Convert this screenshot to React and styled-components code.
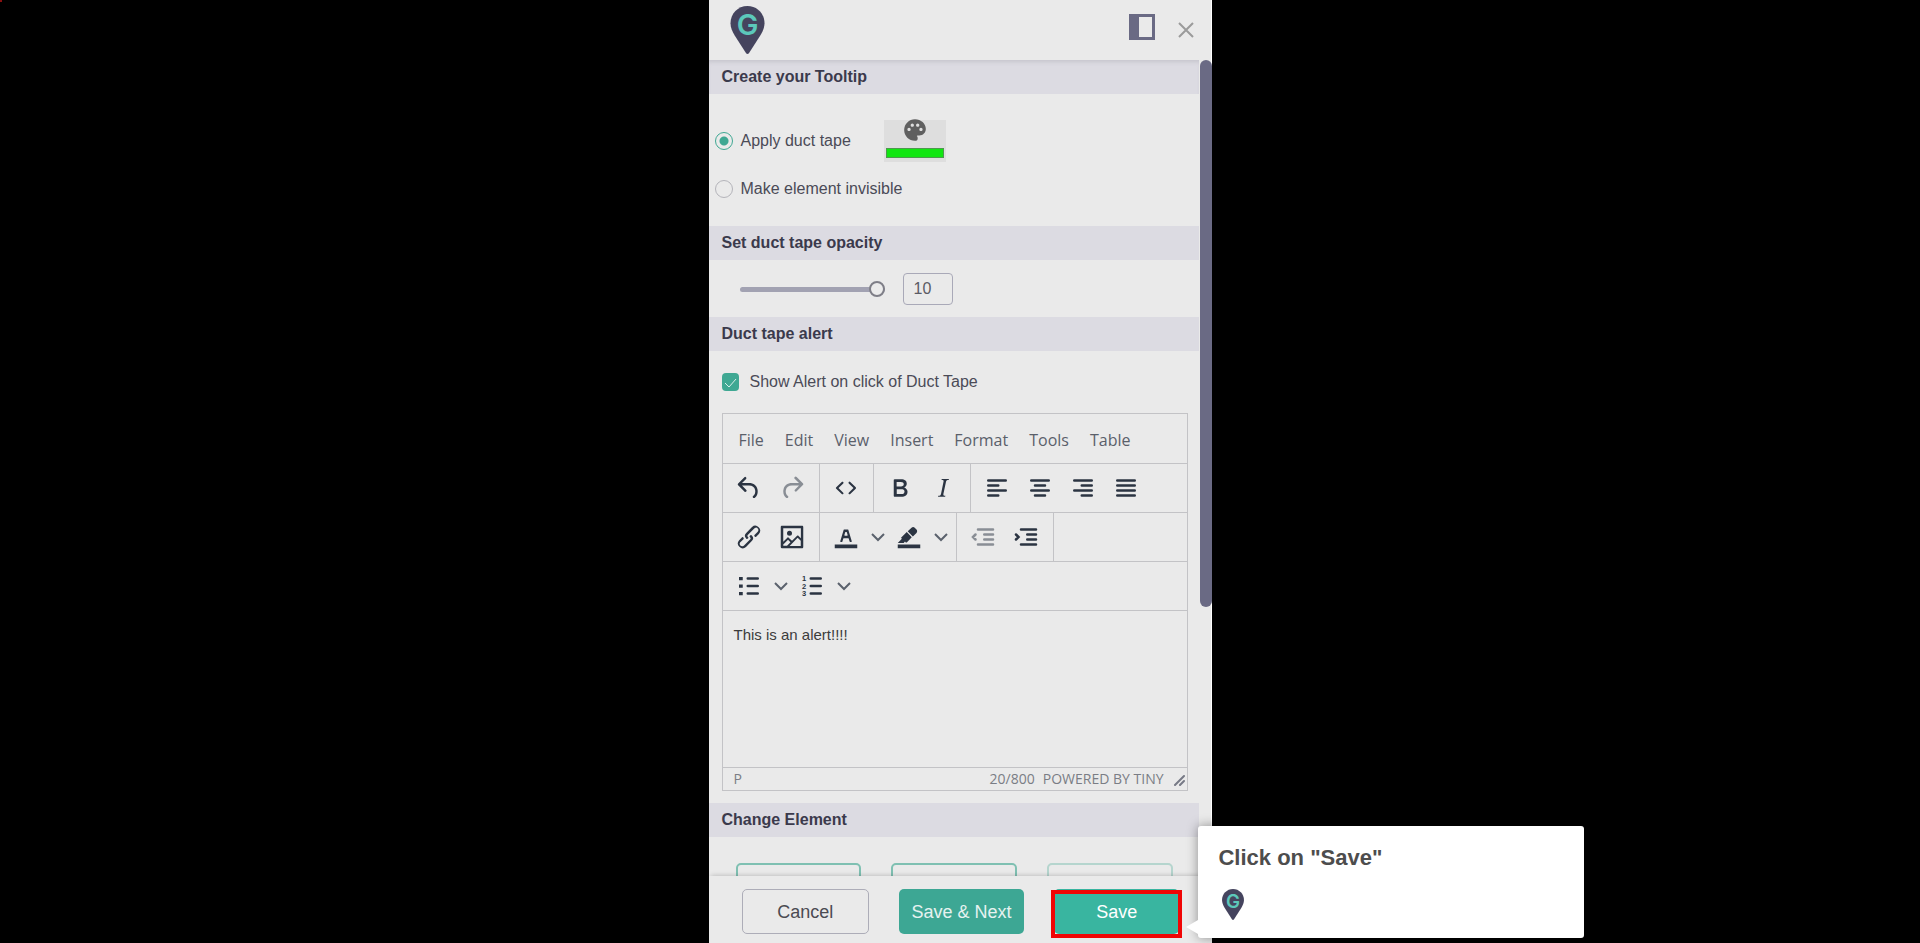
import { useState } from 'react';
import styled, { createGlobalStyle } from 'styled-components';
import { MdPalette } from 'react-icons/md';

const GlobalStyle = createGlobalStyle`
  * {
    box-sizing: border-box;
  }

  body {
    margin: 0;
    background: #000;
    font-family: 'Liberation Sans', Arial, sans-serif;
  }

  button,
  input,
  textarea {
    font-family: inherit;
  }
`;

const Page = styled.main`
  position: relative;
  display: flex;
  justify-content: center;
  height: 100vh;
  background: #000;
`;

const RecordDot = styled.span`
  position: absolute;
  top: 0;
  left: 0;
  width: 2px;
  height: 2px;
  background: #8a1010;
`;

const Panel = styled.section`
  display: flex;
  flex-direction: column;
  width: 100%;
  max-width: 503px;
  background: #eaeaea;
  color: #4b4b57;
`;

const Header = styled.header`
  display: flex;
  align-items: center;
  flex-shrink: 0;
  height: 60px;
  padding: 0 16px 0 21px;
  border-right: 1px solid #fff;
`;

const HeaderActions = styled.div`
  display: flex;
  align-items: center;
  gap: 22px;
  margin-left: auto;
`;

const IconButton = styled.button`
  display: flex;
  align-items: center;
  justify-content: center;
  padding: ${({ $raised }) => ($raised ? '0 0 6px' : '0')};
  border: 0;
  background: transparent;
  cursor: pointer;
`;

const Scroller = styled.div`
  display: flex;
  flex: 1;
  min-height: 0;
`;

const Content = styled.div`
  flex: 1;
  min-width: 0;
  overflow: hidden;
`;

const Scrollbar = styled.div`
  width: 13px;
  flex-shrink: 0;
  padding-left: 1px;
  border-right: 1px solid #fff;
`;

const ScrollThumb = styled.div`
  width: 12px;
  height: 67%;
  border-radius: 6px;
  background: #6a6a84;
`;

const SectionTitle = styled.h2`
  margin: 0;
  padding: 0 13px;
  background: #dcdbe2;
  box-shadow: ${({ $first }) => ($first ? 'inset 0 4px 4px -2px #c6c5cd' : 'none')};
  color: #3b3a4c;
  font-size: 16px;
  font-weight: 700;
  line-height: 34px;
`;

const Options = styled.div`
  display: grid;
  gap: 7px;
  padding: 26px 6px 17px;
`;

const OptionRow = styled.div`
  display: flex;
  align-items: center;
  gap: 33px;
  min-height: 40px;
`;

const OptionLabel = styled.label`
  display: flex;
  align-items: center;
  gap: 8px;
  font-size: 16px;
  line-height: 20px;
`;

const Radio = styled.input`
  appearance: none;
  width: 18px;
  height: 18px;
  margin: 0;
  border: 1px solid ${({ checked }) => (checked ? '#3fa893' : '#b4b4ba')};
  border-radius: 50%;
  background: ${({ checked }) =>
    checked ? 'radial-gradient(circle, #3fa893 0 4px, transparent 5px)' : 'transparent'};
`;

const ColorButton = styled.button`
  display: flex;
  flex-direction: column;
  align-items: center;
  justify-content: space-between;
  width: 62px;
  height: 42px;
  padding: 0 2px 4px;
  border: 0;
  background: #dedede;
  color: #5f5f5f;

  svg {
    margin-top: -3px;
  }
`;

const Swatch = styled.span`
  width: 100%;
  height: 10px;
  border: 1px solid #4d9a4d;
  background: #12e612;
`;

const OpacityRow = styled.div`
  display: flex;
  align-items: center;
  gap: 18px;
  padding: 13px 31px 12px;
`;

const Slider = styled.input`
  appearance: none;
  width: 145px;
  height: 16px;
  margin: 0;
  background: transparent;

  &::-webkit-slider-runnable-track {
    height: 5px;
    border-radius: 3px;
    background: #a2a2b2;
  }

  &::-webkit-slider-thumb {
    appearance: none;
    width: 16px;
    height: 16px;
    margin-top: -6px;
    border: 2px solid #7f7f88;
    border-radius: 50%;
    background: #ececec;
  }
`;

const OpacityInput = styled.input`
  width: 50px;
  height: 32px;
  padding: 0 10px;
  border: 1px solid #a9a9b8;
  border-radius: 4px;
  background: transparent;
  color: #5b5b64;
  font-size: 16px;
`;

const AlertRow = styled.div`
  display: flex;
  padding: 21px 13px;
`;

const CheckLabel = styled(OptionLabel)`
  gap: 11px;
`;

const CheckWrap = styled.span`
  display: grid;
  width: 17px;
  height: 18px;

  > * {
    grid-area: 1 / 1;
  }

  svg {
    pointer-events: none;
  }
`;

const Checkbox = styled.input`
  appearance: none;
  width: 17px;
  height: 18px;
  margin: 0;
  border-radius: 4px;
  background: #3fa893;
`;

const Editor = styled.div`
  margin: 0 11px 12px 13px;
  border: 1px solid #c3c3c6;
  color: #2b3442;
`;

const MenuBar = styled.div`
  display: flex;
  align-items: center;
  gap: 21px;
  height: 50px;
  padding: 2px 16px 0;
  border-bottom: 1px solid #c3c3c6;
`;

const MenuItem = styled.button`
  padding: 0;
  border: 0;
  background: transparent;
  color: #5a606a;
  font-family: 'Open Sans', 'Noto Sans', sans-serif;
  font-size: 16px;
  line-height: 24px;
`;

const ToolRow = styled.div`
  display: flex;
  height: 49px;
  border-bottom: 1px solid #c3c3c6;
`;

const ToolGroup = styled.div`
  display: flex;
  align-items: center;
  padding: 0 5px;
  border-right: ${({ $last }) => ($last ? '0' : '1px solid #c3c3c6')};
`;

const Tool = styled.button`
  display: flex;
  align-items: center;
  justify-content: center;
  width: ${({ $narrow }) => ($narrow ? '20px' : '43px')};
  height: 40px;
  padding: 0;
  border: 0;
  background: transparent;
  color: inherit;
  opacity: ${({ disabled }) => (disabled ? 0.5 : 1)};

  svg {
    flex-shrink: 0;
  }
`;

const AlertText = styled.textarea`
  display: block;
  width: 100%;
  height: 157px;
  padding: 14px 11px;
  border: 0;
  border-bottom: 1px solid #c3c3c6;
  outline: 0;
  background: transparent;
  color: #3c3c3c;
  font-size: 15px;
  line-height: 20px;
  resize: none;
`;

const StatusBar = styled.div`
  display: flex;
  align-items: center;
  gap: 8px;
  height: 22px;
  padding: 0 1px 0 11px;
  color: #7a7d85;
  font-family: 'Open Sans', 'Noto Sans', sans-serif;
  font-size: 14px;
  line-height: 22px;
`;

const WordCount = styled.span`
  margin-left: auto;
`;

const Cards = styled.div`
  display: flex;
  gap: 30px;
  padding: 26px 26px 0 27px;
`;

const Card = styled.button`
  flex: 1;
  height: 60px;
  border: 2px solid #7fc0b2;
  border-radius: 5px;
  background: transparent;
  opacity: ${({ disabled }) => (disabled ? 0.5 : 1)};
`;

const Footer = styled.footer`
  position: relative;
  display: flex;
  flex-shrink: 0;
  gap: 30px;
  padding: 13px 32px 9px 33px;
  background: #eaeaea;
  box-shadow: 0 -2px 5px -2px rgba(0, 0, 0, 0.25);
`;

const Action = styled.button`
  flex: 1;
  width: 100%;
  height: 45px;
  padding: 0;
  border: ${({ $plain }) => ($plain ? '1px solid #adadb8' : '0')};
  border-radius: 5px;
  background: ${({ $plain }) => ($plain ? 'transparent' : '#3da794')};
  color: ${({ $plain }) => ($plain ? '#4b4b52' : '#e6f2f0')};
  font-size: 18px;
  line-height: 24px;
`;

const SaveAction = styled(Action)`
  background: #39b5a0;
  color: #fff;
`;

const Target = styled.div`
  position: relative;
  flex: 1;
`;

const Highlight = styled.span`
  position: absolute;
  inset: 1px -3px -4px;
  border: 4px solid #f00505;
  pointer-events: none;
`;

const Popover = styled.aside`
  position: absolute;
  bottom: -4px;
  left: calc(100% + 19px);
  width: 386px;
  padding: 19px 20px 18px;
  border-radius: 3px;
  background: #fff;
  box-shadow: 0 0 12px rgba(0, 0, 0, 0.4);

  &::before {
    content: '';
    position: absolute;
    bottom: 4px;
    left: -12px;
    border: 7px solid transparent;
    border-right: 12px solid #fff;
    border-left: 0;
  }
`;

const PopoverTitle = styled.h3`
  margin: 0 0 18px;
  color: #4d4d4d;
  font-size: 22px;
  font-weight: 700;
  line-height: 26px;
`;

const PopoverLogo = styled.div`
  display: flex;
  padding-left: 4px;
`;

const Pin = ({ width, height }) => (
  <svg width={width} height={height} viewBox="0 0 34 48" aria-hidden="true">
    <path
      d="M17 0C7.400 0 0 7.600 0 17.200c0 4.300 1.800 8.300 4.200 12.300L15.600 47.200c.7 1 2.100 1 2.800 0L29.800 29.500c2.400-4 4.200-8 4.200-12.300C34 7.600 26.600 0 17 0z"
      fill="#45445e"
    />
    <text
      x="17"
      y="29"
      textAnchor="middle"
      fontFamily="Inter, sans-serif"
      fontSize="29"
      fontWeight="600"
      fill="#5cc8ba"
    >
      G
    </text>
  </svg>
);

// 24-unit toolbar glyphs
const glyphs = {
  undo: 'M6.400 8H12c3.700 0 6.200 2 6.800 5.100.6 2.700-.4 5.600-2.300 6.800a1 1 0 0 1-1-1.800c1.100-.6 1.800-2.700 1.400-4.600-.5-2.100-2.100-3.500-4.900-3.500H6.400l3.300 3.300a1 1 0 1 1-1.400 1.400l-5-5a1 1 0 0 1 0-1.400l5-5a1 1 0 0 1 1.400 1.400L6.400 8z',
  redo: 'M17.600 10H12c-2.800 0-4.400 1.400-4.900 3.500-.4 2 .3 4 1.400 4.600a1 1 0 1 1-1 1.800c-2-1.200-2.900-4.100-2.300-6.800.6-3 3-5.100 6.800-5.100h5.600l-3.300-3.300a1 1 0 1 1 1.400-1.400l5 5a1 1 0 0 1 0 1.400l-5 5a1 1 0 0 1-1.400-1.400l3.300-3.300z',
  code: 'M9.800 15.700c.3.300.3.800 0 1-.3.400-.9.400-1.200 0l-4.400-4.100a.8.8 0 0 1 0-1.200l4.400-4.200c.3-.3.900-.3 1.200 0 .3.300.3.800 0 1.100L6 12l3.800 3.700zM14.200 15.700c-.3.300-.3.800 0 1 .4.400.9.400 1.200 0l4.400-4.100c.3-.3.300-.9 0-1.200l-4.400-4.200a.8.8 0 0 0-1.200 0c-.3.300-.3.800 0 1.100L18 12l-3.800 3.700z',
  bold: 'M7.800 19c-.3 0-.5 0-.6-.2l-.2-.5V5.700c0-.2 0-.4.2-.5l.6-.2h5c1.500 0 2.700.3 3.500 1 .7.600 1.100 1.400 1.100 2.500a3 3 0 0 1-.6 1.900c-.4.600-1 1-1.600 1.200.4.100.9.300 1.300.6s.8.700 1 1.200c.4.400.5 1 .5 1.600 0 1.300-.4 2.300-1.300 3-.8.700-2.100 1-3.800 1H7.800zm5-8.300c.6 0 1.200-.1 1.600-.5.4-.3.6-.7.6-1.300 0-1.100-.8-1.700-2.300-1.700H9.300v3.500h3.400zm.5 6c.7 0 1.300-.1 1.700-.4.4-.4.6-.9.6-1.500s-.2-1-.7-1.400c-.4-.3-1-.4-2-.4H9.400v3.800h4z',
  italic:
    'M16.700 4.700l-.1.900h-.3c-.6 0-1 0-1.400.3-.3.300-.4.600-.5 1.100l-2.100 9.800v.6c0 .5.4.8 1.400.8h.2l-.2.800H8l.2-.8h.2c1.100 0 1.800-.5 2-1.500l2-9.800.1-.5c0-.6-.4-.8-1.400-.8h-.3l.2-.9h5.700z',
  link: 'M6.200 12.300a1 1 0 0 1 1.400 1.400l-2.100 2a2 2 0 1 0 2.700 2.800l4.800-4.800a1 1 0 0 0 0-1.400 1 1 0 1 1 1.400-1.300 2.900 2.900 0 0 1 0 4L9.600 20a3.900 3.900 0 0 1-5.500-5.500l2-2zm11.600-.6a1 1 0 0 1-1.400-1.400l2-2a2 2 0 1 0-2.600-2.800L11 10.300a1 1 0 0 0 0 1.400A1 1 0 1 1 9.600 13a2.900 2.900 0 0 1 0-4L14.400 4a3.900 3.900 0 0 1 5.500 5.500l-2 2z',
  image:
    'M5 15.700l3.300-3.200c.3-.3.700-.3 1 0L12 15l4.100-4c.3-.4.8-.4 1 0l2 1.900V5H5v10.700zM5 18V19h3l2.800-2.900-2-2L5 17.900zm14-3l-2.500-2.400-6.400 6.500H19v-4zM4 3h16c.6 0 1 .4 1 1v16c0 .6-.4 1-1 1H4a1 1 0 0 1-1-1V4c0-.6.4-1 1-1zm6 8a2 2 0 1 0 0-4 2 2 0 0 0 0 4z',
  textColor:
    'M3 18h18v3H3zM8.700 16h-.8a.5.5 0 0 1-.5-.6l2.700-9c.1-.3.3-.4.5-.4h2.800c.2 0 .4.100.5.400l2.700 9a.5.5 0 0 1-.5.600h-.8a.5.5 0 0 1-.4-.4l-.7-2.200c0-.3-.3-.4-.5-.4h-3.400c-.2 0-.4.100-.5.400l-.7 2.200c0 .3-.2.4-.4.4zm2.600-7.600l-.6 2a.5.5 0 0 0 .5.600h1.600a.5.5 0 0 0 .5-.6l-.6-2c0-.3-.3-.4-.5-.4h-.4c-.2 0-.4.100-.5.400z',
  highlight:
    'M3 18h18v3H3zM7.700 16.700H3l3.300-3.300-.7-.8L10.200 8l4 4.100-4 4.200c-.2.2-.6.2-.8 0l-.6-.7-1.100 1.100zM12.700 9.200L11 7.400l3-2.900a2 2 0 0 1 2.600 0L18 6c.7.700.7 2 0 2.700l-2.900 2.900-1.800-1.800-.5-.6',
};

const lines = {
  alignLeft: 'M5 6h14M5 10h8M5 14h14M5 18h8',
  alignCenter: 'M5 6h14M8 10h8M5 14h14M8 18h8',
  alignRight: 'M5 6h14M11 10h8M5 14h14M11 18h8',
  justify: 'M5 6h14M5 10h14M5 14h14M5 18h14',
  outdent: 'M8 6h12M13 10h7M13 14h7M8 18h12M6 10l-2 2 2 2',
  indent: 'M8 6h12M13 10h7M13 14h7M8 18h12M4 10l2 2-2 2',
  bullets: 'M11 6h8M11 12h8M11 18h8',
};

const Glyph = ({ name }) => (
  <svg width="30" height="30" viewBox="0 0 24 24" aria-hidden="true">
    {glyphs[name] ? (
      <path d={glyphs[name]} fill="currentColor" />
    ) : (
      <path
        d={lines[name]}
        fill="none"
        stroke="currentColor"
        strokeWidth="2"
        strokeLinecap="round"
      />
    )}
    {name === 'bullets' && (
      <path d="M4 4.700h3v2.600H4zM4 10.700h3v2.600H4zM4 16.700h3v2.600H4z" fill="currentColor" />
    )}
  </svg>
);

const NumberedGlyph = () => (
  <svg width="30" height="30" viewBox="0 0 24 24" aria-hidden="true">
    <path
      d="M11 6h8M11 12h8M11 18h8"
      stroke="currentColor"
      strokeWidth="2"
      strokeLinecap="round"
    />
    <g fill="currentColor" fontFamily="Liberation Sans, sans-serif" fontSize="6" fontWeight="700">
      <text x="4" y="8">1</text>
      <text x="4" y="14">2</text>
      <text x="4" y="20">3</text>
    </g>
  </svg>
);

const Chevron = () => (
  <svg width="14" height="14" viewBox="0 0 14 14" aria-hidden="true">
    <path d="M1 4l6 6 6-6" fill="none" stroke="#5b626d" strokeWidth="2" />
  </svg>
);

const ToolButton = ({ name, label, disabled, children }) => (
  <Tool type="button" aria-label={label} disabled={disabled}>
    {children || <Glyph name={name} />}
  </Tool>
);

const MoreButton = ({ label }) => (
  <Tool type="button" $narrow aria-label={label}>
    <Chevron />
  </Tool>
);

const menus = ['File', 'Edit', 'View', 'Insert', 'Format', 'Tools', 'Table'];

const AlertEditor = () => (
  <Editor>
    <MenuBar>
      {menus.map((menu) => (
        <MenuItem key={menu} type="button">{menu}</MenuItem>
      ))}
    </MenuBar>
    <ToolRow>
      <ToolGroup>
        <ToolButton name="undo" label="Undo" />
        <ToolButton name="redo" label="Redo" disabled />
      </ToolGroup>
      <ToolGroup>
        <ToolButton name="code" label="Source code" />
      </ToolGroup>
      <ToolGroup>
        <ToolButton name="bold" label="Bold" />
        <ToolButton name="italic" label="Italic" />
      </ToolGroup>
      <ToolGroup $last>
        <ToolButton name="alignLeft" label="Align left" />
        <ToolButton name="alignCenter" label="Align center" />
        <ToolButton name="alignRight" label="Align right" />
        <ToolButton name="justify" label="Justify" />
      </ToolGroup>
    </ToolRow>
    <ToolRow>
      <ToolGroup>
        <ToolButton name="link" label="Link" />
        <ToolButton name="image" label="Image" />
      </ToolGroup>
      <ToolGroup>
        <ToolButton name="textColor" label="Text color" />
        <MoreButton label="Text color menu" />
        <ToolButton name="highlight" label="Background color" />
        <MoreButton label="Background color menu" />
      </ToolGroup>
      <ToolGroup>
        <ToolButton name="outdent" label="Decrease indent" disabled />
        <ToolButton name="indent" label="Increase indent" />
      </ToolGroup>
    </ToolRow>
    <ToolRow>
      <ToolGroup $last>
        <ToolButton name="bullets" label="Bullet list" />
        <MoreButton label="Bullet list menu" />
        <ToolButton label="Numbered list">
          <NumberedGlyph />
        </ToolButton>
        <MoreButton label="Numbered list menu" />
      </ToolGroup>
    </ToolRow>
    <AlertText aria-label="Alert text" defaultValue="This is an alert!!!!" />
    <StatusBar>
      <span>P</span>
      <WordCount>20/800</WordCount>
      <span>POWERED BY TINY</span>
      <svg width="14" height="14" viewBox="0 0 14 14" aria-hidden="true">
        <path d="M3 13L12 4M8 13l4-4" stroke="#777a86" strokeWidth="2" strokeLinecap="round" />
      </svg>
    </StatusBar>
  </Editor>
);

const App = () => {
  const [mode, setMode] = useState('tape');
  const [opacity, setOpacity] = useState(10);
  const [showAlert, setShowAlert] = useState(true);

  return (
    <>
      <GlobalStyle />
      <Page>
        <RecordDot />
        <Panel>
          <Header>
            <Pin width={35} height={48} />
            <HeaderActions>
              <IconButton type="button" aria-label="Dock panel" $raised>
                <svg width="26" height="26" viewBox="0 0 26 26" aria-hidden="true">
                  <path d="M0 0h26v26H0zM10 3v20h13V3z" fill="#6a6a84" fillRule="evenodd" />
                </svg>
              </IconButton>
              <IconButton type="button" aria-label="Close">
                <svg width="18" height="18" viewBox="0 0 18 18" aria-hidden="true">
                  <path d="M2 2l14 14M16 2L2 16" stroke="#9b9b9b" strokeWidth="2" />
                </svg>
              </IconButton>
            </HeaderActions>
          </Header>

          <Scroller>
            <Content>
              <SectionTitle $first>Create your Tooltip</SectionTitle>
              <Options>
                <OptionRow>
                  <OptionLabel>
                    <Radio
                      type="radio"
                      name="mode"
                      checked={mode === 'tape'}
                      onChange={() => setMode('tape')}
                    />
                    Apply duct tape
                  </OptionLabel>
                  <ColorButton type="button" aria-label="Tape color">
                    <MdPalette size={26} />
                    <Swatch />
                  </ColorButton>
                </OptionRow>
                <OptionRow>
                  <OptionLabel>
                    <Radio
                      type="radio"
                      name="mode"
                      checked={mode === 'invisible'}
                      onChange={() => setMode('invisible')}
                    />
                    Make element invisible
                  </OptionLabel>
                </OptionRow>
              </Options>

              <SectionTitle>Set duct tape opacity</SectionTitle>
              <OpacityRow>
                <Slider
                  type="range"
                  min="0"
                  max="10"
                  aria-label="Opacity"
                  value={opacity}
                  onChange={(e) => setOpacity(e.target.value)}
                />
                <OpacityInput
                  type="text"
                  aria-label="Opacity value"
                  value={opacity}
                  onChange={(e) => setOpacity(e.target.value)}
                />
              </OpacityRow>

              <SectionTitle>Duct tape alert</SectionTitle>
              <AlertRow>
                <CheckLabel>
                  <CheckWrap>
                    <Checkbox
                      type="checkbox"
                      checked={showAlert}
                      onChange={(e) => setShowAlert(e.target.checked)}
                    />
                    {showAlert && (
                      <svg width="17" height="18" viewBox="0 0 17 18" aria-hidden="true">
                        <path d="M3 10l4 4 7-8" fill="none" stroke="#d9efea" />
                      </svg>
                    )}
                  </CheckWrap>
                  Show Alert on click of Duct Tape
                </CheckLabel>
              </AlertRow>
              <AlertEditor />

              <SectionTitle>Change Element</SectionTitle>
              <Cards>
                <Card type="button" aria-label="Reselect element" />
                <Card type="button" aria-label="Replace element" />
                <Card type="button" aria-label="Reset element" disabled />
              </Cards>
            </Content>
            <Scrollbar>
              <ScrollThumb />
            </Scrollbar>
          </Scroller>

          <Footer>
            <Action type="button" $plain>Cancel</Action>
            <Action type="button">Save &amp; Next</Action>
            <Target>
              <SaveAction type="button">Save</SaveAction>
              <Highlight />
              <Popover>
                <PopoverTitle>Click on "Save"</PopoverTitle>
                <PopoverLogo>
                  <Pin width={22} height={31} />
                </PopoverLogo>
              </Popover>
            </Target>
          </Footer>
        </Panel>
      </Page>
    </>
  );
};

export default App;
